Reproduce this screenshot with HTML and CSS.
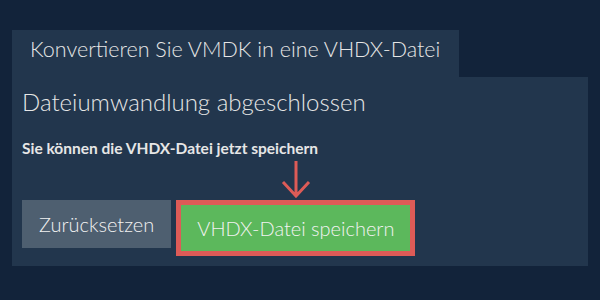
FILE: index.html
```html
<!DOCTYPE html>
<html lang="de">
<head>
    <meta charset="UTF-8">
    <meta name="viewport" content="width=device-width, initial-scale=1.0">
    <title>VMDK in VHDX konvertieren</title>
    <link rel="stylesheet" href="styles.css">
</head>
<body>
    <div class="converter">
        <div class="tab">Konvertieren Sie VMDK in eine VHDX-Datei</div>

        <div class="panel">
            <h2 class="panel-title">Dateiumwandlung abgeschlossen</h2>
            <p class="panel-note">Sie können die VHDX-Datei jetzt speichern</p>

            <div class="actions">
                <button class="btn btn-reset">Zurücksetzen</button>
                <div class="save-wrap">
                    <svg class="pointer" width="30" height="37" viewBox="0 0 30 37">
                        <path d="M15 0 V35 M2 21 L15 35 L28 21" fill="none" stroke="#dd5b57" stroke-width="3"/>
                    </svg>
                    <button class="btn btn-save">VHDX-Datei speichern</button>
                </div>
            </div>
        </div>
    </div>
</body>
</html>
```

FILE: styles.css
```css
body {
    margin: 0;
    background-color: #12233a;
    font-family: 'Lato', 'Liberation Sans', sans-serif;
    color: #e6e6e6;
}

.converter {
    padding: 30px 12px 0;
}

.tab {
    display: inline-block;
    background-color: #22364d;
    font-size: 21.5px;
    font-weight: 300;
    line-height: 25px;
    padding: 7px 19px 15px 18px;
}

.panel {
    background-color: #22364d;
    padding: 10px 10px 10px 10px;
}

.panel-title {
    margin: 0;
    font-size: 24px;
    font-weight: 300;
    line-height: 29px;
}

.panel-note {
    margin: 24px 0 0;
    font-size: 15.5px;
    font-weight: bold;
    line-height: 17px;
}

.actions {
    display: flex;
    align-items: flex-start;
    gap: 5px;
    margin-top: 43px;
}

.btn {
    font-family: inherit;
    font-weight: 300;
    border: none;
    color: #f2f2f2;
    font-size: 20px;
    cursor: pointer;
}

.btn-reset {
    background-color: #4e5f70;
    height: 48px;
    padding: 0 17px;
}

.save-wrap {
    position: relative;
}

.pointer {
    position: absolute;
    left: 50%;
    bottom: 100%;
    margin-left: -15px;
    margin-bottom: 2px;
}

.btn-save {
    background-color: #5cb85c;
    border: 5px solid #dd5b57;
    height: 56px;
    padding: 0 16px;
}
```
